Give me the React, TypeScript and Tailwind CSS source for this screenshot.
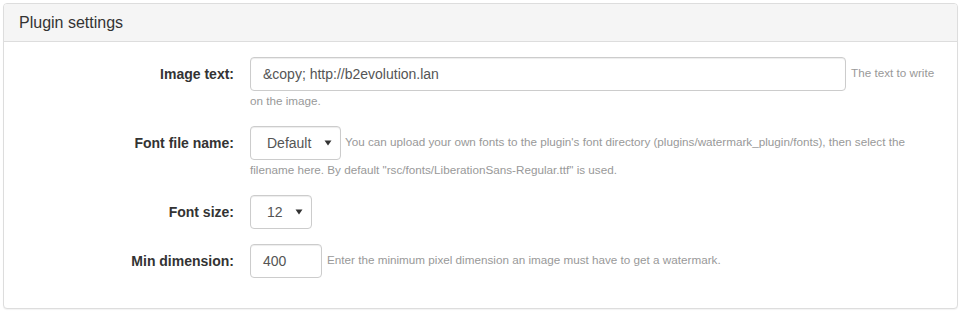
import React from 'react';

const Caret = () => (
    <svg width="8" height="6" viewBox="0 0 8 6" className="shrink-0">
        <path d="M0.5 0.5 H7.5 L4 5.5 Z" fill="#333" />
    </svg>
);

const FakeSelect = ({ value, width, padLeft }: { value: string, width: string, padLeft: string }) => (
    <span className={`inline-flex items-center justify-between align-middle h-[34px] ${width} ${padLeft} pr-[8px] border border-[#ccc] rounded-[4px] bg-white text-[14px] leading-[20px] text-[#555] shadow-[inset_0_1px_1px_rgba(0,0,0,0.075)]`}>
        <span>{value}</span>
        <Caret />
    </span>
);

const FieldRow = ({ label, children }: { label: string, children: React.ReactNode }) => (
    <div className="flex mb-[15px]">
        <div className="w-[215px] shrink-0 h-[34px] flex items-center justify-end text-[14px] font-bold text-[#333]">{label}</div>
        <div className="ml-[16px] flex-1 text-[11.7px] leading-[20px] text-[#999]">{children}</div>
    </div>
);

const App = () => {
    return (
        <div className="p-[3px] bg-white" style={{ fontFamily: '"Liberation Sans", Arial, sans-serif' }}>
            <div className="border border-[#ddd] rounded-[4px] bg-white shadow-[0_1px_1px_rgba(0,0,0,0.05)]">
                <div className="px-[15px] pt-[10px] pb-[9px] bg-[#f5f5f5] border-b border-[#ddd] rounded-t-[3px]">
                    <h3 className="text-[16px] leading-[18px] text-[#333]">Plugin settings</h3>
                </div>
                <div className="px-[15px] py-[15px]">
                    <FieldRow label="Image text:">
                        <span className="inline-flex items-center align-middle h-[34px] w-[596px] px-[12px] border border-[#ccc] rounded-[4px] bg-white text-[14px] text-[#555] shadow-[inset_0_1px_1px_rgba(0,0,0,0.075)]">&amp;copy; http://b2evolution.lan</span>
                        <span className="ml-[5px]">The text to write on the image.</span>
                    </FieldRow>
                    <FieldRow label="Font file name:">
                        <FakeSelect value="Default" width="w-[91px]" padLeft="pl-[16px]" />
                        <span className="ml-[4px]">You can upload your own fonts to the plugin's font directory (plugins/watermark_plugin/fonts), then select the filename here. By default "rsc/fonts/LiberationSans-Regular.ttf" is used.</span>
                    </FieldRow>
                    <FieldRow label="Font size:">
                        <FakeSelect value="12" width="w-[62px]" padLeft="pl-[16px]" />
                    </FieldRow>
                    <FieldRow label="Min dimension:">
                        <span className="inline-flex items-center align-middle h-[34px] w-[72px] px-[12px] border border-[#ccc] rounded-[4px] bg-white text-[14px] text-[#555] shadow-[inset_0_1px_1px_rgba(0,0,0,0.075)]">400</span>
                        <span className="ml-[5px]">Enter the minimum pixel dimension an image must have to get a watermark.</span>
                    </FieldRow>
                </div>
            </div>
        </div>
    );
};

export default App;
